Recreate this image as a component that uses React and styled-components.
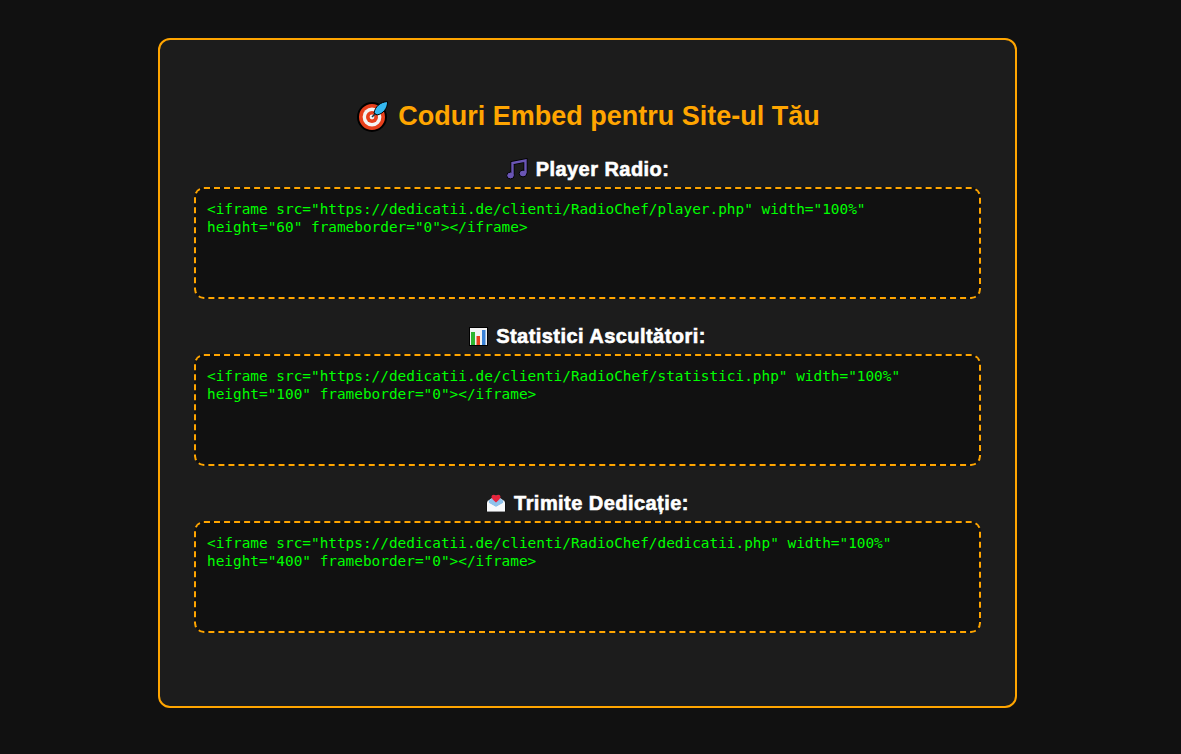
import styled, { createGlobalStyle } from 'styled-components'

const GlobalStyle = createGlobalStyle`
	html, body {
		margin: 0;
		padding: 0;
		background: #111111;
	}
	body {
		font-family: 'Liberation Sans', Arial, sans-serif;
	}
`

const TargetIcon = () => (
	<EmojiSvg $size={32} viewBox='0 0 32 32'>
		<circle cx='15' cy='17' r='14' fill='#e8401c' stroke='#000' strokeWidth='2' />
		<circle cx='15' cy='17' r='9.4' fill='#f4f4f4' />
		<circle cx='15' cy='17' r='6' fill='#e8401c' />
		<circle cx='15' cy='17' r='2.4' fill='#f4f4f4' />
		<path d='M15 17 L22 10' stroke='#1b3a4d' strokeWidth='1.6' />
		<path
			d='M17 13 C18 7 23 2 30.5 1.5 C31 8 26 14 20 15 Z'
			fill='#35b8f0'
			stroke='#000'
			strokeWidth='1'
		/>
	</EmojiSvg>
)

const MusicIcon = () => (
	<EmojiSvg $size={22} viewBox='0 0 22 22'>
		<path d='M6.5 17 V5 L19.5 2.5 V15' fill='none' stroke='#000' strokeWidth='4' />
		<ellipse cx='4.5' cy='17.5' rx='3.8' ry='3.4' fill='#6a55b5' stroke='#000' />
		<ellipse cx='17' cy='15.5' rx='3.8' ry='3.4' fill='#6a55b5' stroke='#000' />
		<path d='M6.5 17 V5 L19.5 2.5 V15' fill='none' stroke='#6a55b5' strokeWidth='2.4' />
	</EmojiSvg>
)

const ChartIcon = () => (
	<EmojiSvg $size={19} viewBox='0 0 19 19'>
		<rect x='0.5' y='0.5' width='18' height='18' fill='#f3f3f3' stroke='#000' />
		<rect x='2' y='5' width='4' height='13' fill='#2fb52f' />
		<rect x='7.5' y='9' width='3.5' height='9' fill='#e8401c' />
		<rect x='13' y='3' width='3.5' height='15' fill='#3b82d6' />
	</EmojiSvg>
)

const EnvelopeIcon = () => (
	<EmojiSvg $size={20} viewBox='0 0 20 20'>
		<path d='M1 8 L10 2 L19 8 V18.5 H1 Z' fill='#eef3f8' stroke='#000' strokeWidth='0.6' />
		<path d='M3 7.5 L10 3 L17 7.5 V10 L10 14 L3 10 Z' fill='#8fc2ec' />
		<path
			d='M10 9.5 C7 7 5.5 5.5 5.5 3.8 C5.5 1.8 8.5 1 10 3 C11.5 1 14.5 1.8 14.5 3.8 C14.5 5.5 13 7 10 9.5 Z'
			fill='#e8233c'
		/>
		<path d='M1 9 L10 14 L19 9 V18.5 H1 Z' fill='#f7f9fb' />
	</EmojiSvg>
)

const embeds = [
	{
		icon: <MusicIcon />,
		label: 'Player Radio:',
		code: '<iframe src="https://dedicatii.de/clienti/RadioChef/player.php" width="100%" height="60" frameborder="0"></iframe>',
	},
	{
		icon: <ChartIcon />,
		label: 'Statistici Ascultători:',
		code: '<iframe src="https://dedicatii.de/clienti/RadioChef/statistici.php" width="100%" height="100" frameborder="0"></iframe>',
	},
	{
		icon: <EnvelopeIcon />,
		label: 'Trimite Dedicație:',
		code: '<iframe src="https://dedicatii.de/clienti/RadioChef/dedicatii.php" width="100%" height="400" frameborder="0"></iframe>',
	},
]

const App = () => {
	return (
		<Page>
			<GlobalStyle />
			<Card>
				<Title>
					<TargetIcon />
					Coduri Embed pentru Site-ul Tău
				</Title>
				{embeds.map((embed) => (
					<Section key={embed.label}>
						<Label>
							{embed.icon}
							{embed.label}
						</Label>
						<CodeBox>{embed.code}</CodeBox>
					</Section>
				))}
			</Card>
		</Page>
	)
}

const Page = styled.div`
	min-height: 754px;
	box-sizing: border-box;
	padding: 38px 6px 0 0;
	display: flex;
	justify-content: center;
	align-items: flex-start;
`

const Card = styled.div`
	width: 859px;
	height: 670px;
	box-sizing: border-box;
	padding: 59px 34px 0;
	background: #1c1c1c;
	border: 2px solid #ffa500;
	border-radius: 12px;
	display: flex;
	flex-direction: column;
`

const Title = styled.h2`
	margin: 0 0 25px;
	height: 34px;
	padding-left: 2px;
	display: flex;
	align-items: center;
	justify-content: center;
	gap: 9px;
	color: #ffa500;
	font-size: 27px;
	font-weight: bold;
`

const EmojiSvg = styled.svg`
	width: ${(props) => props.$size}px;
	height: ${(props) => props.$size}px;
	flex-shrink: 0;
`

const Section = styled.div`
	margin-bottom: 26px;
`

const Label = styled.div`
	height: 22px;
	margin-bottom: 7px;
	display: flex;
	align-items: center;
	justify-content: center;
	gap: 8px;
	color: #ffffff;
	font-size: 20px;
	font-weight: bold;
	letter-spacing: 0.45px;
	-webkit-text-stroke: 0.6px #ffffff;
`

const CodeBox = styled.div`
	height: 112px;
	box-sizing: border-box;
	padding: 11px 11px;
	background: #111111;
	border: 2px dashed #ffa500;
	border-radius: 10px;
	color: #00ff00;
	font-family: 'DejaVu Sans Mono', monospace;
	font-size: 14.4px;
	line-height: 18px;
	white-space: pre-wrap;
`

export default App
